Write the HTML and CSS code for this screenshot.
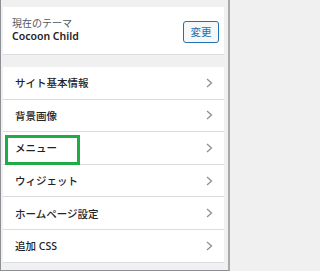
FILE: index.html
```html
<!DOCTYPE html>
<html lang="ja">
<head>
<meta charset="utf-8">
<link rel="stylesheet" href="styles.css">
</head>
<body>
<div class="frame">
  <section class="theme">
    <div class="theme-info">
      <div class="theme-label">現在のテーマ</div>
      <div class="theme-name">Cocoon Child</div>
    </div>
    <button class="change-btn">変更</button>
  </section>
  <ul class="menu">
    <li class="item"><span>サイト基本情報</span><svg class="chev" width="7" height="10" viewBox="0 0 7 10"><polyline points="1,1 5.5,5 1,9" fill="none" stroke="#8c8f94" stroke-width="1.3"/></svg></li>
    <li class="item"><span>背景画像</span><svg class="chev" width="7" height="10" viewBox="0 0 7 10"><polyline points="1,1 5.5,5 1,9" fill="none" stroke="#8c8f94" stroke-width="1.3"/></svg></li>
    <li class="item"><span>メニュー</span><svg class="chev" width="7" height="10" viewBox="0 0 7 10"><polyline points="1,1 5.5,5 1,9" fill="none" stroke="#8c8f94" stroke-width="1.3"/></svg></li>
    <li class="item"><span>ウィジェット</span><svg class="chev" width="7" height="10" viewBox="0 0 7 10"><polyline points="1,1 5.5,5 1,9" fill="none" stroke="#8c8f94" stroke-width="1.3"/></svg></li>
    <li class="item"><span>ホームページ設定</span><svg class="chev" width="7" height="10" viewBox="0 0 7 10"><polyline points="1,1 5.5,5 1,9" fill="none" stroke="#8c8f94" stroke-width="1.3"/></svg></li>
    <li class="item"><span>追加 CSS</span><svg class="chev" width="7" height="10" viewBox="0 0 7 10"><polyline points="1,1 5.5,5 1,9" fill="none" stroke="#8c8f94" stroke-width="1.3"/></svg></li>
  </ul>
  <div class="highlight"></div>
</div>
</body>
</html>
```

FILE: styles.css
```css
html, body {
  margin: 0;
  padding: 0;
}
body {
  font-family: "Noto Sans", "Noto Sans CJK JP", sans-serif;
  background: #f0f0f1;
}
.frame {
  position: relative;
  box-sizing: border-box;
  width: 230px;
  height: 271px;
  background: #f0f0f1;
  border-left: 1px solid #8c8f94;
  border-right: 2px solid #a7aaad;
  border-bottom: 1px solid #8c8f94;
  padding: 7px 4px 0 2px;
}
.theme {
  box-sizing: border-box;
  height: 48px;
  background: #fff;
  border-bottom: 1px solid #dcdcde;
  display: flex;
  align-items: center;
  justify-content: space-between;
  padding: 0 5px 0 9px;
}
.theme-info {
  display: flex;
  flex-direction: column;
  margin-top: -2px;
}
.theme-label {
  font-size: 10px;
  line-height: 13px;
  color: #50575e;
}
.theme-name {
  font-size: 10.5px;
  line-height: 13px;
  font-weight: 600;
  color: #1d2327;
}
.change-btn {
  box-sizing: border-box;
  width: 36px;
  height: 22px;
  margin-top: 2px;
  padding: 0;
  border: 1px solid #2271b1;
  border-radius: 3px;
  background: #f6f7f7;
  color: #2271b1;
  font-family: "Noto Sans CJK JP", sans-serif;
  font-size: 10.5px;
  line-height: 20px;
}
.menu {
  list-style: none;
  margin: 12px 0 0;
  padding: 0;
}
.item {
  box-sizing: border-box;
  height: 32.6px;
  background: #fff;
  border-bottom: 1px solid #dcdcde;
  display: flex;
  align-items: center;
  justify-content: space-between;
  padding: 0 11px 0 12px;
  font-size: 10.5px;
  font-weight: 500;
  color: #1d2327;
}
.chev {
  display: block;
}
.highlight {
  position: absolute;
  left: 4px;
  top: 135px;
  width: 75px;
  height: 30px;
  box-sizing: border-box;
  border: 3px solid #1fab45;
}
```
